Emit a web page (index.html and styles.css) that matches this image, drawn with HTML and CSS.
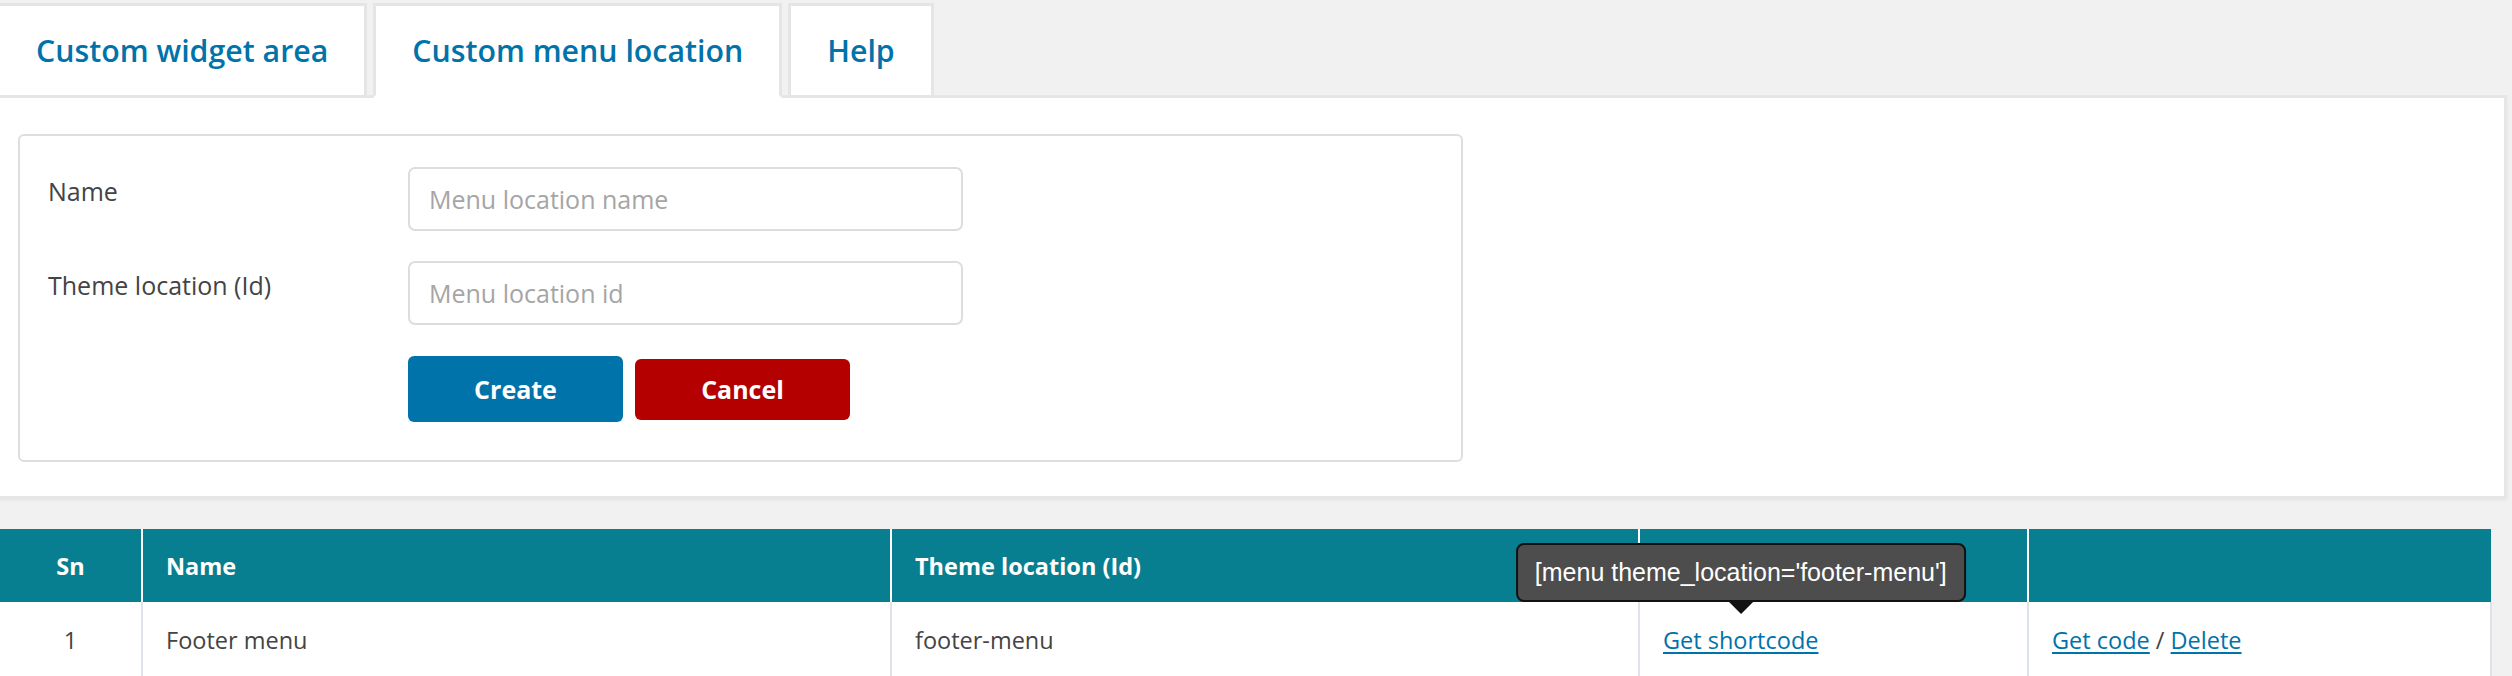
FILE: index.html
```html
<!DOCTYPE html>
<html>
<head>
<meta charset="utf-8">
<link rel="stylesheet" href="styles.css">
</head>
<body>
<div class="tabs">
  <a class="tab">Custom widget area</a>
  <a class="tab active">Custom menu location</a>
  <a class="tab">Help</a>
</div>
<div class="panel">
  <div class="form-box">
    <div class="row">
      <label class="label">Name</label>
      <input class="input" type="text" placeholder="Menu location name">
    </div>
    <div class="row">
      <label class="label">Theme location (Id)</label>
      <input class="input" type="text" placeholder="Menu location id">
    </div>
    <div class="row buttons">
      <span class="label"></span>
      <button class="btn btn-create">Create</button>
      <button class="btn btn-cancel">Cancel</button>
    </div>
  </div>
</div>
<table class="list">
  <colgroup>
    <col class="c-sn"><col class="c-name"><col class="c-theme"><col class="c-short"><col class="c-act">
  </colgroup>
  <thead>
    <tr><th class="sn">Sn</th><th>Name</th><th>Theme location (Id)</th><th></th><th></th></tr>
  </thead>
  <tbody>
    <tr>
      <td class="sn">1</td>
      <td>Footer menu</td>
      <td>footer-menu</td>
      <td><span class="tip-wrap"><a class="link">Get shortcode</a><span class="tooltip">[menu theme_location='footer-menu']</span></span></td>
      <td><a class="link">Get code</a> / <a class="link">Delete</a></td>
    </tr>
  </tbody>
</table>
</body>
</html>
```
FILE: styles.css
```css
html, body {
  margin: 0;
  padding: 0;
}
body {
  background: #f1f1f1;
  font-family: "Open Sans", "Noto Sans", sans-serif;
  color: #444;
  width: 2512px;
  height: 676px;
  overflow: hidden;
}
.tabs {
  display: flex;
  align-items: flex-end;
  padding-top: 3px;
  margin-left: -3px;
}
.tab {
  position: relative;
  z-index: 1;
  display: block;
  background: #fff;
  border: 3px solid #e5e5e5;
  height: 89px;
  line-height: 89px;
  padding: 0 36px;
  margin-right: 6px;
  margin-bottom: -3px;
  font-size: 30.3px;
  font-weight: 600;
  color: #0073aa;
  text-decoration: none;
}
.tab.active {
  border-bottom-color: #fff;
}
.panel {
  background: #fff;
  border: 3px solid #e6e6e6;
  border-bottom-width: 2px;
  margin-left: -3px;
  margin-right: 5px;
  padding: 36px 18px 34px 18px;
  box-shadow: 0 2px 3px rgba(0, 0, 0, 0.06);
}
.form-box {
  width: 1445px;
  border: 2px solid #dedede;
  border-radius: 6px;
  padding: 31px 0 38px 28px;
  box-sizing: border-box;
  display: flex;
  flex-direction: column;
  gap: 30px;
}
.row {
  display: flex;
  align-items: flex-start;
}
.buttons {
  margin-top: 1px;
  align-items: center;
  gap: 12px;
}
.buttons .label {
  margin-right: -12px;
}
.label {
  width: 360px;
  flex: none;
  font-size: 25px;
  line-height: 36px;
  padding-top: 6px;
  color: #444;
}
.buttons .label {
  padding-top: 0;
}
.input {
  width: 555px;
  height: 64px;
  box-sizing: border-box;
  border: 2px solid #dddddd;
  border-radius: 7px;
  padding: 0 19px;
  font-family: "Open Sans", "Noto Sans", sans-serif;
  font-size: 25px;
  color: #444;
  background: #fff;
  outline: none;
  margin: 0;
}
.input::placeholder {
  color: #a5a5a5;
}
.btn {
  width: 215px;
  border: none;
  border-radius: 6px;
  color: #fff;
  font-family: "Open Sans", "Noto Sans", sans-serif;
  font-weight: 700;
  font-size: 25px;
  padding: 0;
  margin: 0;
}
.btn-create {
  height: 66px;
  background: #0073aa;
}
.btn-cancel {
  height: 61px;
  background: #b50000;
}
.list {
  margin-top: 31px;
  width: 2491px;
  border-collapse: collapse;
  table-layout: fixed;
  font-size: 23.5px;
}
.c-sn { width: 142px; }
.c-name { width: 749px; }
.c-theme { width: 748px; }
.c-short { width: 389px; }
.c-act { width: 463px; }
.list th {
  background: #087f91;
  color: #fff;
  font-weight: 700;
  text-align: left;
  height: 73px;
  padding: 0 23px;
  border-left: 2px solid #fff;
  box-sizing: border-box;
}
.list th:first-child {
  border-left: none;
}
.list td {
  background: #fff;
  color: #444;
  line-height: 34px;
  padding: 21px 23px;
  border-left: 2px solid #dde3e8;
  vertical-align: top;
}
.list td:first-child {
  border-left: none;
}
.list td:last-child {
  border-right: 2px solid #dde3e8;
}
.list .sn {
  text-align: center;
  padding-left: 0;
  padding-right: 0;
}
.link {
  color: #0073aa;
  text-decoration: underline;
  text-underline-offset: 3px;
}
.tip-wrap {
  position: relative;
  display: inline-block;
}
.tooltip {
  position: absolute;
  left: 50%;
  bottom: calc(100% + 21px);
  transform: translateX(-50%);
  white-space: nowrap;
  background: #4d4d4d;
  border: 2px solid #111;
  border-radius: 8px;
  color: #fff;
  font-family: "Liberation Sans", Arial, sans-serif;
  font-size: 25px;
  line-height: 55px;
  padding: 0 17px;
}
.tooltip::after {
  content: "";
  position: absolute;
  left: 50%;
  top: 100%;
  margin-left: -14px;
  border-left: 14px solid transparent;
  border-right: 14px solid transparent;
  border-top: 14px solid #111;
}
```
